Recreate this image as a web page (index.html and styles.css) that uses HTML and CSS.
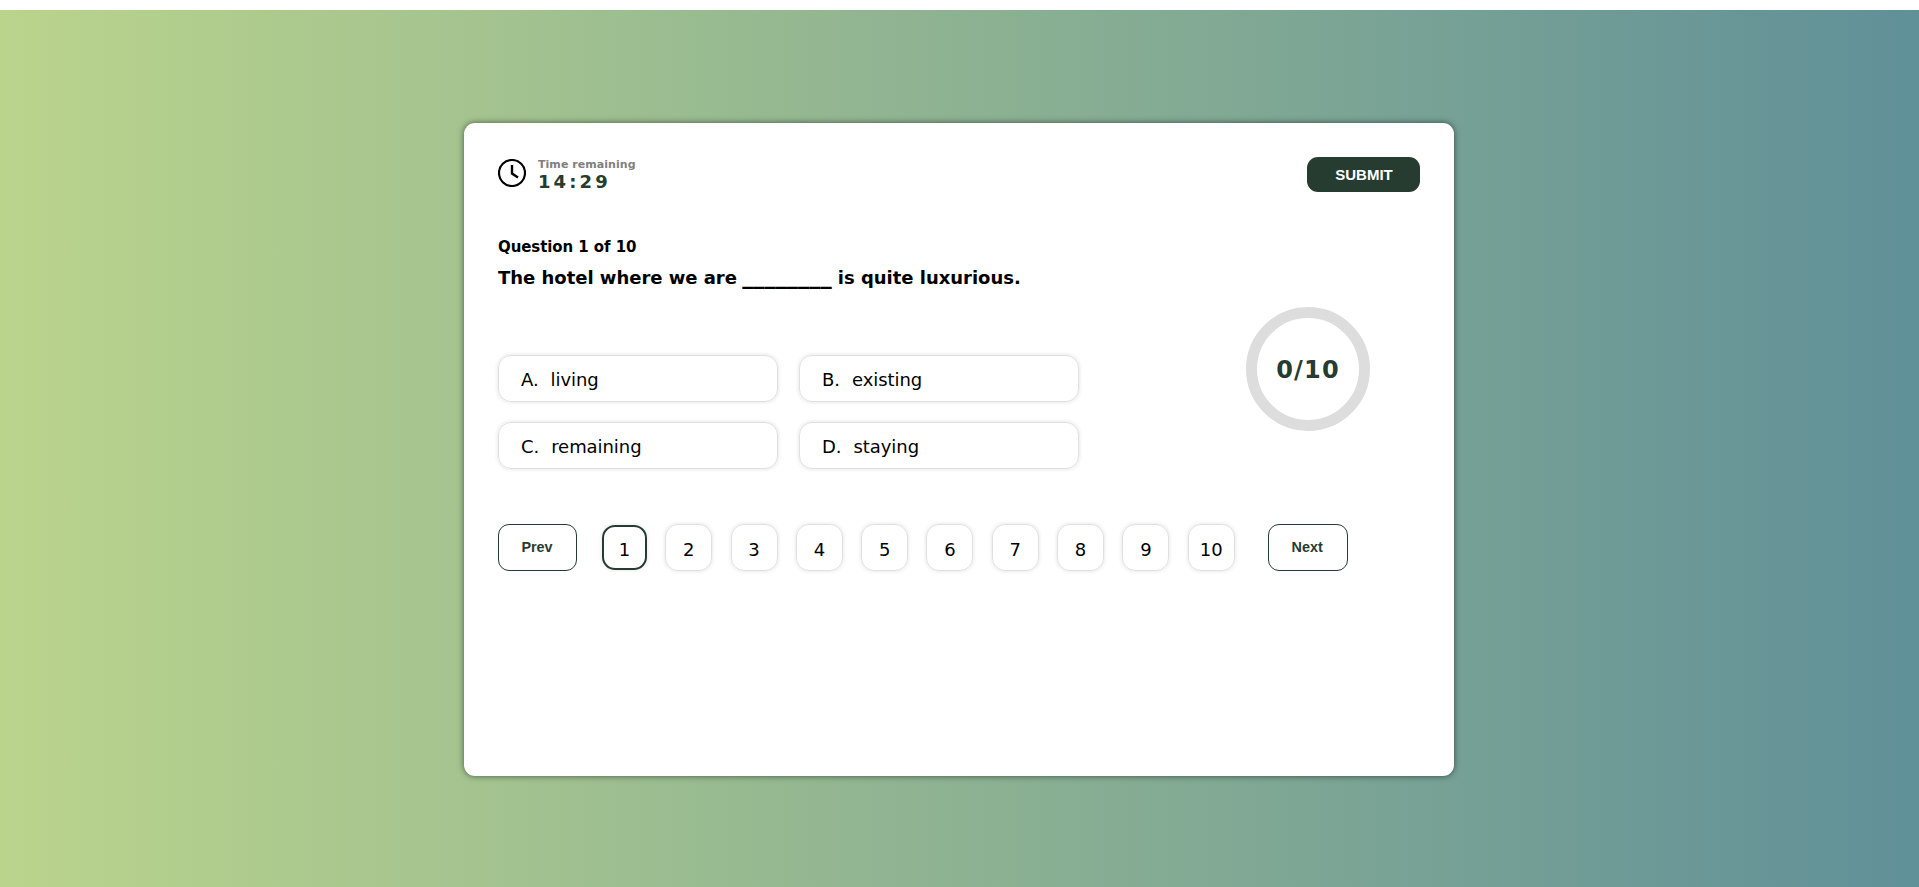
FILE: index.html
```html
<!DOCTYPE html>
<html lang="en">
<head>
<meta charset="utf-8">
<title>Quiz</title>
<link rel="stylesheet" href="styles.css">
</head>
<body>
<div class="page">
  <main class="card">
    <header class="top">
      <div class="timer">
        <svg class="clock" viewBox="0 0 28 28" fill="none" stroke="#000"><circle cx="14" cy="14" r="13" stroke-width="2.2"/><path d="M14 6v8.5l6 4" stroke-width="2.4"/></svg>
        <div>
          <div class="label">Time remaining</div>
          <div class="time">14:29</div>
        </div>
      </div>
      <button class="submit">SUBMIT</button>
    </header>
    <div class="count">Question 1 of 10</div>
    <div class="question">The hotel where we are <span class="blank">________</span> is quite luxurious.</div>
    <section class="middle">
      <div class="options">
        <div class="option"><span>A.</span><span>living</span></div>
        <div class="option"><span>B.</span><span>existing</span></div>
        <div class="option"><span>C.</span><span>remaining</span></div>
        <div class="option"><span>D.</span><span>staying</span></div>
      </div>
      <div class="score">0/10</div>
    </section>
    <nav class="pager">
      <button class="step">Prev</button>
      <div class="pages">
        <div class="num active">1</div>
        <div class="num">2</div>
        <div class="num">3</div>
        <div class="num">4</div>
        <div class="num">5</div>
        <div class="num">6</div>
        <div class="num">7</div>
        <div class="num">8</div>
        <div class="num">9</div>
        <div class="num">10</div>
      </div>
      <button class="step next">Next</button>
    </nav>
  </main>
</div>
</body>
</html>
```
FILE: styles.css
```css
* { box-sizing: border-box; }
body { margin: 0; padding-top: 10px; height: 887px; overflow: hidden; background: #fff; font-family: Verdana, "DejaVu Sans", sans-serif; color: #000; }
.page { height: 877px; padding-top: 113px; background: linear-gradient(to right, #bad48c, #609098); }
.card { width: 990px; height: 653px; margin-left: 464px; padding: 34px 34px 0; background: #fff; border-radius: 11px; box-shadow: 0 0 6px rgba(0, 0, 0, .55); }
.top { display: flex; justify-content: space-between; align-items: flex-start; height: 80px; }
.timer { display: flex; gap: 12px; padding-top: 1px; }
.clock { width: 28px; height: 28px; margin-top: 1px; }
.label { font-size: 11px; line-height: 14px; font-weight: bold; letter-spacing: .05px; color: #808080; white-space: nowrap; }
.time { font-size: 18px; line-height: 20px; font-weight: bold; letter-spacing: 3.1px; color: #273c30; }
.submit { width: 113px; height: 35px; padding: 0 0 0 1px; border: 0; border-radius: 11px; background: #273c30; color: #fff; font: bold 15px "Liberation Sans", Arial, sans-serif; }
.count { font-size: 15px; line-height: 20px; font-weight: bold; letter-spacing: -.08px; }
.question { height: 24px; margin-top: 8px; font-size: 18px; line-height: 24px; font-weight: bold; letter-spacing: -.02px; white-space: nowrap; }
.blank { margin-left: -1px; font-size: 22.4px; line-height: 1; }
.middle { display: flex; justify-content: space-between; height: 235px; padding: 18px 50px 0 0; }
.options { display: grid; grid-template-columns: 280px 280px; grid-template-rows: 47px 47px; gap: 20px 21px; margin: 48px 0 0; }
.option { display: flex; align-items: center; gap: 12px; padding: 2px 0 0 22px; border: 1px solid #e0e0e0; border-radius: 13px; box-shadow: 0 0 4px rgba(0, 0, 0, .13); font-size: 18px; letter-spacing: -.06px; white-space: nowrap; }
.score { display: flex; align-items: center; justify-content: center; width: 124px; height: 124px; padding-top: 2px; border: 11px solid #ddd; border-radius: 50%; font-size: 24px; font-weight: bold; letter-spacing: 1.2px; color: #273c30; }
.pager { display: flex; align-items: center; }
.step { width: 79px; height: 47px; padding: 0 1px 1px 0; border: 1px solid #273c30; border-radius: 11px; background: #fff; color: #273c30; font: bold 14.4px "Liberation Sans", Arial, sans-serif; }
.pages { display: flex; gap: 18.3px; margin: 0 33px 0 25px; }
.num { display: flex; align-items: center; justify-content: center; width: 47px; height: 47px; padding-top: 4px; border: 1px solid #e0e0e0; border-radius: 13px; box-shadow: 0 0 4px rgba(0, 0, 0, .12); font-size: 18px; }
.num.active { width: 45px; height: 45px; margin: 1px 0; border: 2px solid #273c30; }
.next { width: 80px; }
```
